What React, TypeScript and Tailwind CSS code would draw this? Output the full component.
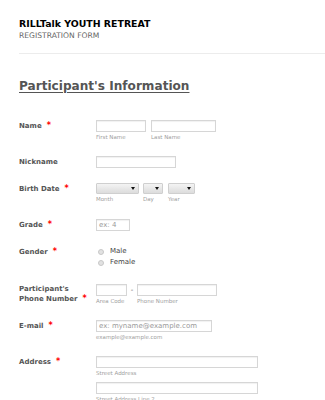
import React from "react";

const font = { fontFamily: '"DejaVu Sans", Verdana, sans-serif' };

function Req() {
  return <span className="ml-[5px] text-[8px] text-[#ff0000]">*</span>;
}

function Label({ children, req }: { children: React.ReactNode; req?: boolean }) {
  return (
    <div className="w-[77px] shrink-0 whitespace-nowrap text-[7px] font-bold leading-[10px] text-[#555] pt-[1px]">
      {children}
      {req && <Req />}
    </div>
  );
}

function Box({ w, placeholder }: { w: string; placeholder?: string }) {
  return (
    <div
      className={`${w} h-[12px] border border-[#d6d6d6] bg-white shadow-[inset_0_1px_1px_rgba(0,0,0,0.06)] flex items-center px-[2px] text-[7px] text-[#999] leading-none whitespace-nowrap`}
    >
      {placeholder}
    </div>
  );
}

function Sub({ children }: { children: React.ReactNode }) {
  return <div className="mt-[1px] text-[5.5px] leading-[8px] text-[#a0a0a0] whitespace-nowrap">{children}</div>;
}

function Select({ w }: { w: string }) {
  return (
    <div
      className={`${w} h-[11px] border border-[#cfcfcf] rounded-[1px] bg-gradient-to-b from-[#f4f4f4] to-[#dcdcdc] flex items-center justify-end pr-[3px]`}
    >
      <svg width="4" height="3" viewBox="0 0 4 3">
        <path d="M0 0h4L2 3z" fill="#111" />
      </svg>
    </div>
  );
}

function Radio({ label }: { label: string }) {
  return (
    <div className="flex items-center h-[11px]">
      <span className="ml-[2px] w-[6px] h-[6px] rounded-full border border-[#c8c8c8] bg-[#e2e2e2]" />
      <span className="ml-[6px] text-[7px] text-[#444]">{label}</span>
    </div>
  );
}

export default function App() {
  return (
    <div className="w-[325px] h-[400px] overflow-hidden bg-white" style={font}>
      {/* Header */}
      <div className="pl-[19px] pt-[18px]">
        <div className="text-[9.4px] font-bold leading-[11px] text-black whitespace-nowrap">RILLTalk YOUTH RETREAT</div>
        <div className="mt-[2px] text-[7.6px] leading-[9px] text-[#666] whitespace-nowrap">REGISTRATION FORM</div>
      </div>
      <div className="ml-[19px] mt-[13px] border-t border-[#ececec]" />

      <div className="pl-[19px] pt-[25px]">
        <div className="text-[12.1px] font-bold leading-[15px] text-[#555] underline underline-offset-[2px] whitespace-nowrap">
          Participant's Information
        </div>
      </div>

      {/* Fields */}
      <div className="pl-[19px] pt-[26px] flex flex-col gap-[15px]">
        <div className="flex">
          <Label req>Name</Label>
          <div className="flex gap-[5px]">
            <div>
              <Box w="w-[50px]" />
              <Sub>First Name</Sub>
            </div>
            <div>
              <Box w="w-[65px]" />
              <Sub>Last Name</Sub>
            </div>
          </div>
        </div>

        <div className="flex">
          <Label>Nickname</Label>
          <Box w="w-[80px]" />
        </div>

        <div className="flex pb-[1px]">
          <Label req>Birth Date</Label>
          <div className="flex">
            <div>
              <Select w="w-[43px]" />
              <Sub>Month</Sub>
            </div>
            <div className="ml-[4px]">
              <Select w="w-[20px]" />
              <Sub>Day</Sub>
            </div>
            <div className="ml-[5px]">
              <Select w="w-[27px]" />
              <Sub>Year</Sub>
            </div>
          </div>
        </div>

        <div className="flex">
          <Label req>Grade</Label>
          <Box w="w-[34px]" placeholder="ex: 4" />
        </div>

        <div className="flex">
          <Label req>Gender</Label>
          <div className="flex flex-col">
            <Radio label="Male" />
            <Radio label="Female" />
          </div>
        </div>

        <div className="flex pt-[1px]">
          <div className="w-[77px] shrink-0 whitespace-nowrap text-[7px] font-bold leading-[9px] text-[#555] pt-[1px]">
            Participant's
            <br />
            Phone Number
            <Req />
          </div>
          <div className="flex">
            <div>
              <Box w="w-[31px]" />
              <Sub>Area Code</Sub>
            </div>
            <div className="w-[10px] text-center text-[7px] leading-[12px] text-[#555]">-</div>
            <div>
              <Box w="w-[80px]" />
              <Sub>Phone Number</Sub>
            </div>
          </div>
        </div>

        <div className="flex">
          <Label req>E-mail</Label>
          <div>
            <Box w="w-[116px]" placeholder="ex: myname@example.com" />
            <Sub>example@example.com</Sub>
          </div>
        </div>

        <div className="flex">
          <Label req>Address</Label>
          <div>
            <Box w="w-[162px]" />
            <Sub>Street Address</Sub>
            <div className="mt-[5px]">
              <Box w="w-[162px]" />
              <Sub>Street Address Line 2</Sub>
            </div>
          </div>
        </div>
      </div>
    </div>
  );
}
